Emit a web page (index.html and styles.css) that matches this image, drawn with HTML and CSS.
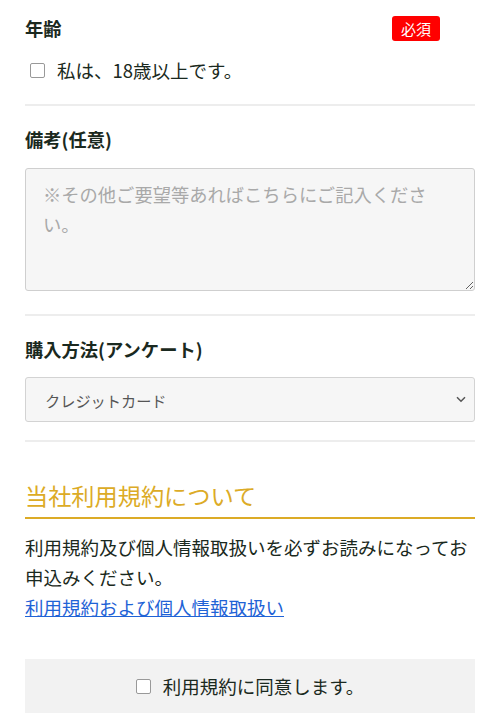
FILE: index.html
```html
<!DOCTYPE html>
<html lang="ja">
<head>
<meta charset="utf-8">
<link rel="stylesheet" href="styles.css">
</head>
<body>
<div class="form">
  <section class="field field-first">
    <div class="label-row">
      <span class="label">年齢</span>
      <span class="badge">必須</span>
    </div>
    <label class="check-row">
      <input type="checkbox" class="check">
      <span>私は、18歳以上です。</span>
    </label>
  </section>
  <hr class="divider">
  <section class="field">
    <div class="label">備考(任意)</div>
    <textarea class="textarea" placeholder="※その他ご要望等あればこちらにご記入ください。"></textarea>
  </section>
  <hr class="divider divider-b">
  <section class="field">
    <div class="label">購入方法(アンケート)</div>
    <div class="select-wrap">
      <select class="select">
        <option>クレジットカード</option>
      </select>
      <svg class="chevron" width="10" height="7" viewBox="0 0 10 7"><path d="M1 1.2 L5 5.2 L9 1.2" fill="none" stroke="#555" stroke-width="1.5"/></svg>
    </div>
  </section>
  <hr class="divider divider-c">
  <section class="terms">
    <h2 class="terms-title">当社利用規約について</h2>
    <p class="terms-text">利用規約及び個人情報取扱いを必ずお読みになってお申込みください。<br><a href="#" class="terms-link">利用規約および個人情報取扱い</a></p>
    <label class="agree">
      <input type="checkbox" class="check">
      <span>利用規約に同意します。</span>
    </label>
  </section>
</div>
</body>
</html>
```
FILE: styles.css
```css
html, body {
  margin: 0;
  padding: 0;
  background: #fff;
}
body {
  font-family: "Noto Sans CJK JP", "Noto Sans", sans-serif;
  color: #1a2920;
  font-size: 18.5px;
}
.form {
  padding: 0 25px;
}
.field {
  padding-top: 18px;
}
.field.field-first {
  padding-top: 13px;
}
.label-row {
  display: flex;
  align-items: center;
  justify-content: space-between;
  height: 30px;
}
.label {
  font-weight: bold;
  font-size: 18.3px;
  line-height: 30px;
}
.badge {
  background: #ff0000;
  color: #fff;
  font-size: 15px;
  line-height: 25px;
  height: 25px;
  width: 48px;
  text-align: center;
  border-radius: 3px;
  margin-right: 35px;
}
.check-row {
  display: flex;
  align-items: center;
  margin-top: 12px;
  height: 30px;
  font-size: 18.5px;
  padding-left: 5px;
}
.check {
  appearance: none;
  -webkit-appearance: none;
  width: 15px;
  height: 15px;
  margin: 0 12px 0 0;
  border: 1px solid #999;
  border-radius: 2px;
  background: #fff;
  flex: none;
}
.divider {
  border: 0;
  height: 2px;
  background: #ededed;
  margin: 19px 0 0;
}
.textarea {
  display: block;
  box-sizing: border-box;
  width: 100%;
  height: 123px;
  margin-top: 14px;
  padding: 10px 30px 0 17px;
  font-family: inherit;
  font-size: 18.3px;
  line-height: 30px;
  background: #f6f6f6;
  border: 1px solid #cfcfcf;
  border-radius: 3px;
  color: #333;
}
.textarea::placeholder {
  color: #a9a9a9;
}
.divider-b {
  margin-top: 23px;
}
.divider-c {
  margin-top: 18px;
}
.select-wrap {
  position: relative;
  margin-top: 13px;
}
.select {
  appearance: none;
  -webkit-appearance: none;
  display: block;
  box-sizing: border-box;
  width: 100%;
  height: 45px;
  padding: 0 19px;
  font-family: inherit;
  font-size: 15.2px;
  color: #555;
  background: #f6f6f6;
  border: 1px solid #d3d3d3;
  border-radius: 3px;
}
.chevron {
  position: absolute;
  right: 9px;
  top: 19px;
}
.terms {
  padding-top: 36px;
}
.terms-title {
  margin: 0;
  font-size: 23.2px;
  font-weight: normal;
  line-height: 34px;
  color: #dcab26;
  padding-bottom: 5px;
  border-bottom: 2px solid #dcab26;
}
.terms-text {
  margin: 13px 0 0;
  font-size: 18.5px;
  line-height: 30px;
}
.terms-link {
  color: #1f63d6;
  text-decoration: underline;
}
.agree {
  display: flex;
  align-items: center;
  justify-content: center;
  margin-top: 37px;
  height: 54px;
  background: #f2f2f2;
  font-size: 18.5px;
}
```
